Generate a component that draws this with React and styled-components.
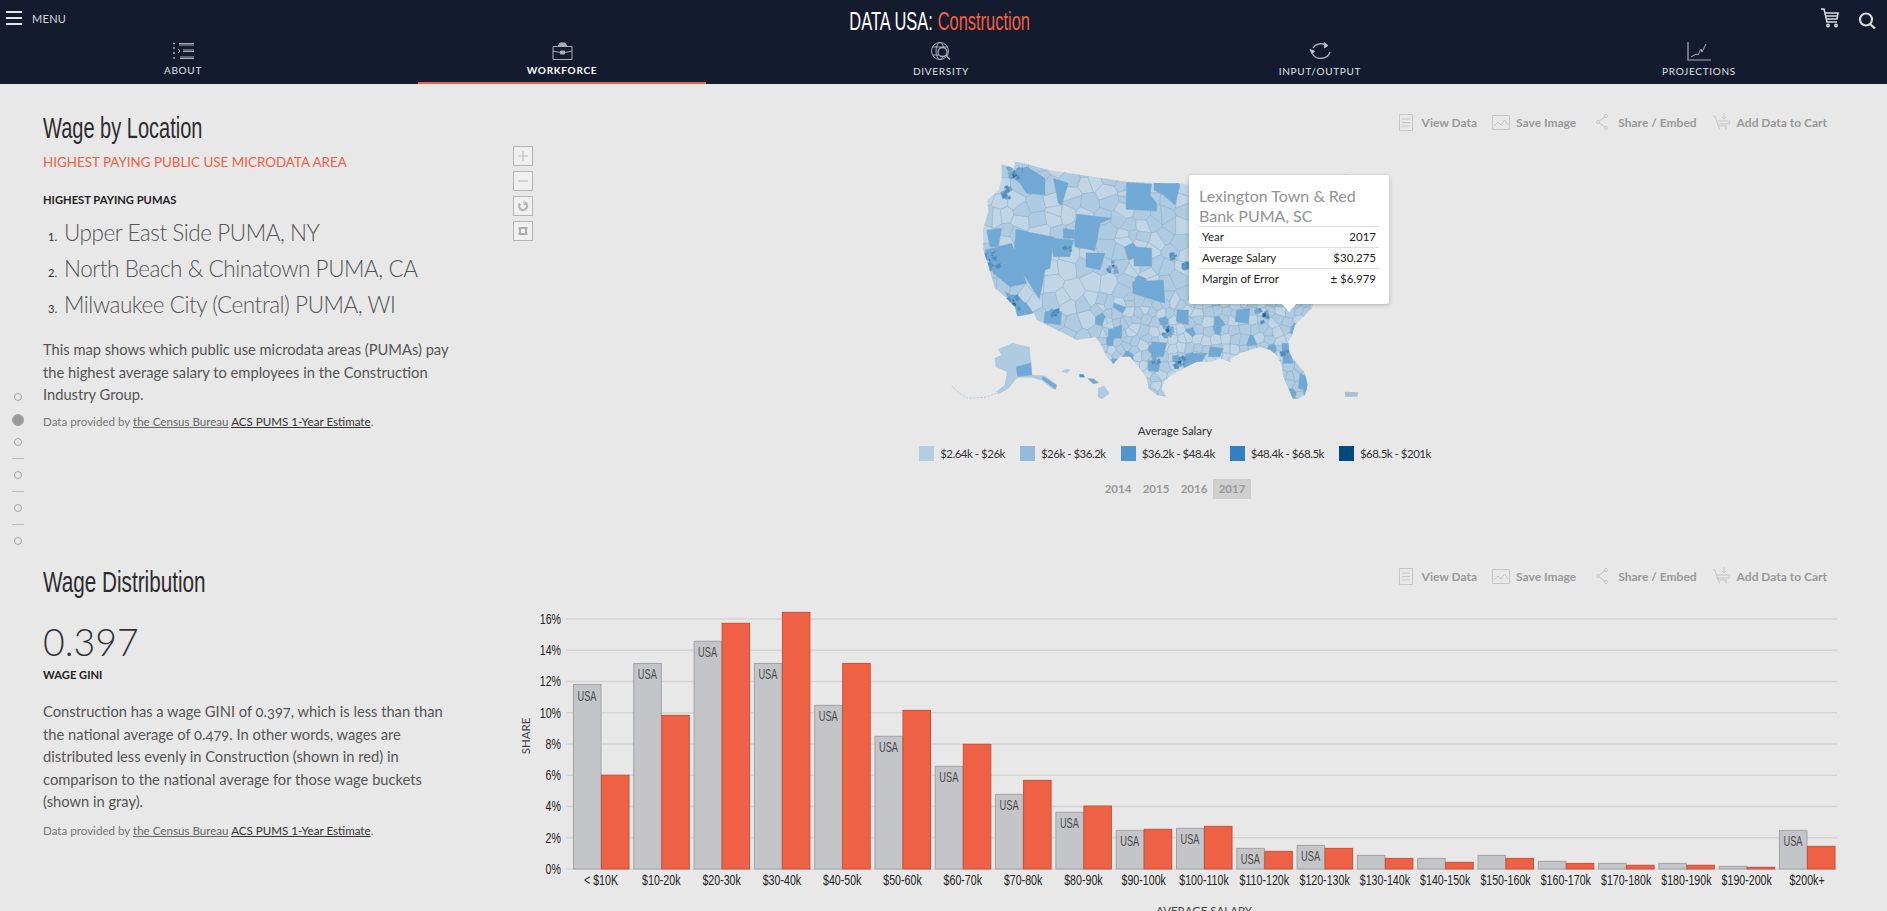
import React from "react";
import styled, { createGlobalStyle } from "styled-components";

const sans = '"Liberation Sans", Arial, sans-serif';
const body = 'Lato, "Noto Sans", sans-serif';
const red = "#ef6145";

const GlobalStyle = createGlobalStyle`
  html, body { margin: 0; height: 911px; overflow: hidden; background: #e8e8e8; }
  body { font-family: ${body}; color: #555; }
  * { box-sizing: border-box; }
`;

const Page = styled.div`
  position: relative;
  width: 1887px;
`;

/* header */
const Header = styled.header`
  height: 84px;
  background: #141b2e;
`;
const TopBar = styled.div`
  display: grid;
  grid-template-columns: 1fr auto 1fr;
  align-items: flex-start;
  height: 37px;
  padding: 8px 10px 0 6px;
`;
const MenuBtn = styled.div`
  display: flex;
  align-items: center;
  gap: 10px;
  margin-top: 3px;
  color: #d6d8dd;
  font: 400 11px ${body};
  letter-spacing: 0.3px;
`;
const Burger = styled.div`
  width: 16px;
  height: 14px;
  border-top: 2px solid #e4e5e8;
  border-bottom: 2px solid #e4e5e8;
  position: relative;
  &::after {
    content: "";
    position: absolute;
    left: 0;
    right: 0;
    top: 4px;
    height: 2px;
    background: #e4e5e8;
  }
`;
const Logo = styled.div`
  font: 400 26.5px/24px ${sans};
  color: #fff;
  white-space: nowrap;
  margin: 1px 4px 0 0;
  transform: scaleX(0.62);
  span {
    color: ${red};
    margin-left: 8px;
  }
`;
const HeadIcons = styled.div`
  display: flex;
  justify-content: flex-end;
  gap: 18px;
`;
const TabRow = styled.nav`
  display: flex;
  gap: 91px;
  margin-left: 39px;
`;
const Tab = styled.a`
  width: 288px;
  height: 47px;
  display: flex;
  flex-direction: column;
  align-items: center;
  padding-top: 5px;
  border-bottom: 2px solid ${(p) => (p.$active ? red : "transparent")};
  color: ${(p) => (p.$active ? "#fff" : "#dfe1e5")};
  font: ${(p) => (p.$active ? 700 : 400)} 10px/14px ${body};
  letter-spacing: 0.7px;
  svg {
    display: block;
    margin-bottom: 3px;
  }
`;

/* sections */
const Section = styled.section`
  display: flex;
  height: ${(p) => p.$h}px;
  padding: 26px 50px 0 43px;
  gap: 62px;
`;
const Side = styled.div`
  width: 408px;
  flex: none;
`;
const Viz = styled.div`
  flex: 1;
  min-width: 0;
`;
const Title = styled.h2`
  margin: 0;
  width: 240px;
  font: 400 30px/36px ${sans};
  color: #2c2c2c;
  white-space: nowrap;
  transform: scaleX(${(p) => p.$squeeze});
  transform-origin: left center;
`;
const Sub = styled.div`
  margin-top: 7px;
  font: 400 13.4px/18px ${body};
  color: ${red};
  text-transform: uppercase;
`;
const Label = styled.div`
  margin-top: ${(p) => p.$top}px;
  font: 700 11.2px/16px ${body};
  color: #222;
  text-transform: uppercase;
`;
const Rank = styled.ol`
  margin: 6.5px 0 0;
  padding: 0;
  list-style: none;
`;
const RankItem = styled.li`
  display: flex;
  align-items: baseline;
  height: 36px;
  font: 300 22.5px/36px ${body};
  letter-spacing: -0.45px;
  color: #555;
  small {
    width: 21px;
    padding-left: 5px;
    font: 400 11px ${body};
    letter-spacing: 0;
    color: #333;
  }
`;
const Text = styled.p`
  margin: ${(p) => p.$top}px 0 0;
  font: 400 14.7px/22.6px ${body};
  color: #555;
  font-variant-numeric: oldstyle-nums;
`;
const Source = styled.div`
  margin-top: ${(p) => p.$top}px;
  font: 400 11.6px/16px ${body};
  color: #777;
  a {
    color: #666;
    text-decoration: underline;
  }
  a + a {
    color: #333;
  }
`;
const Stat = styled.div`
  margin-top: 19px;
  font: 300 37.5px/46px ${body};
  color: #333;
`;

/* actions */
const Actions = styled.div`
  display: flex;
  justify-content: flex-end;
  align-items: center;
  height: 24px;
  padding-right: 10px;
`;
const Action = styled.a`
  display: flex;
  align-items: center;
  gap: ${(p) => p.$gap}px;
  margin-left: ${(p) => p.$left}px;
  font: 700 12px ${body};
  color: #999;
`;

/* map */
const MapRow = styled.div`
  display: flex;
  height: 280px;
  margin-top: 6px;
`;
const Controls = styled.div`
  width: 20px;
  padding-top: 6px;
  display: flex;
  flex-direction: column;
  gap: 5px;
`;
const Ctrl = styled.div`
  width: 20px;
  height: 20px;
  border: 1px solid #b5b5b5;
  background: #f0f0f0;
  display: flex;
  align-items: center;
  justify-content: center;
`;
const MapBox = styled.div`
  position: relative;
  width: 500px;
  height: 280px;
  margin-left: 397px;
`;
const MapSvg = styled.svg`
  display: block;
`;
const Tooltip = styled.div`
  position: absolute;
  left: 259px;
  top: 35px;
  width: 200px;
  height: 129px;
  padding: 11px 10px 0;
  background: #fff;
  border-radius: 2px;
  box-shadow: 0 1px 4px rgba(0, 0, 0, 0.25);
  &::after {
    content: "";
    position: absolute;
    left: 93px;
    bottom: -8px;
    border-left: 7px solid transparent;
    border-right: 7px solid transparent;
    border-top: 8px solid #fff;
  }
`;
const TipTitle = styled.div`
  font: 400 16px/20px ${body};
  color: #929292;
  height: 40px;
`;
const TipRow = styled.div`
  display: flex;
  justify-content: space-between;
  height: 21px;
  padding: 0 3px;
  border-top: 1px solid #ddd;
  font: 400 11.5px/20px ${body};
  color: #222;
`;
const LegendTitle = styled.div`
  margin-top: 3px;
  text-align: center;
  font: 400 11.5px/16px ${body};
  color: #333;
`;
const Legend = styled.div`
  display: flex;
  justify-content: center;
  gap: 15px;
  margin-top: 7px;
`;
const LegendItem = styled.div`
  display: flex;
  align-items: center;
  gap: 6px;
  font: 400 11.5px/15px ${body};
  letter-spacing: -0.5px;
  color: #333;
  i {
    width: 15px;
    height: 15px;
    background: ${(p) => p.$c};
  }
`;
const Years = styled.div`
  display: flex;
  justify-content: center;
  margin-top: 18px;
`;
const Year = styled.div`
  width: 38px;
  height: 20px;
  text-align: center;
  font: 700 11.5px/20px ${body};
  color: #999;
  background: ${(p) => (p.$on ? "#cfcfcf" : "transparent")};
`;

const ChartSvg = styled.svg`
  display: block;
  margin-top: 12px;
  overflow: hidden;
`;

/* side dots */
const Dots = styled.div`
  position: absolute;
  left: 13px;
  top: 393px;
  width: 10px;
  display: flex;
  flex-direction: column;
  align-items: center;
`;
const Dot = styled.div`
  flex: none;
  width: ${(p) => (p.$on ? 12 : 8)}px;
  height: ${(p) => (p.$on ? 12 : 8)}px;
  margin-bottom: ${(p) => (p.$on ? 12 : 12.5)}px;
  border-radius: 50%;
  border: 1px solid #a5a5a5;
  background: ${(p) => (p.$on ? "#999" : "transparent")};
`;
const Rule = styled.div`
  flex: none;
  width: 12px;
  height: 1px;
  margin-bottom: 11.5px;
  background: #bbb;
`;

/* map drawing, in 3x coordinates of the 500x280 box */
const shades = ["#c0d6e6", "#aecbe1", "#70a9d5", "#4a8ec6", "#1f5f94"];

const outline = [[215,72],[252,85],[255,65],[290,72],[355,90],[440,103],[590,125],[700,130],[755,130],[790,140],[860,150],[900,130],[1000,160],[1100,170],[1200,150],[1245,103],[1262,105],[1290,160],[1230,200],[1200,260],[1170,330],[1180,420],[1150,492],[1145,505],[1120,530],[1095,555],[1085,590],[1075,605],[1078,640],[1100,670],[1125,700],[1133,735],[1125,765],[1100,778],[1088,775],[1075,745],[1060,710],[1055,680],[1045,650],[1020,630],[990,622],[960,630],[930,640],[905,655],[900,665],[870,655],[845,665],[800,665],[770,680],[740,695],[705,720],[695,745],[708,770],[680,765],[655,745],[650,715],[625,680],[600,650],[570,650],[550,672],[530,650],[510,610],[497,592],[440,600],[385,572],[320,540],[312,520],[262,530],[255,500],[225,470],[195,445],[180,395],[175,375],[160,330],[158,270],[175,215],[172,180],[205,150],[215,120]];

const bigCells = [[530,160,0],[470,130,0],[430,185,1],[370,230,0],[590,300,0],[630,310,0],[280,470,0],[230,300,0],[270,240,0],[200,225,0],[400,480,0],[480,480,0],[620,380,0],[530,540,0],[650,400,0]];

const overlays = [
  [[[258,268],[372,292],[360,385],[345,390],[338,430],[328,478],[250,355]],2],
  [[[440,222],[545,235],[510,250],[495,332],[435,320],[432,285]],2],
  [[[590,128],[665,132],[660,165],[680,190],[680,213],[588,208]],2],
  [[[612,320],[665,325],[665,378],[612,378]],2],
  [[[535,570],[575,555],[575,595],[535,595]],2],
  [[[345,515],[395,515],[392,555],[342,548]],2],
  [[[370,115],[415,130],[395,195],[385,190]],2],
  [[[672,105],[725,105],[750,135],[735,195],[700,165],[672,150]],2],
  [[[468,338],[525,340],[510,390],[468,380]],2],
  [[[608,425],[700,420],[705,490],[608,460]],2],
  [[[740,510],[775,510],[775,555],[740,545]],2],
  [[[665,605],[710,610],[700,650],[665,650]],2],
  [[[655,660],[690,670],[685,695],[655,692]],2],
  [[[232,100],[290,80],[345,115],[345,165],[290,160],[270,130]],2],
  [[[170,270],[215,265],[205,320],[180,320]],2],
  [[[165,330],[245,310],[290,430],[240,440],[190,400]],2],
  [[[225,455],[290,490],[310,520],[262,528]],2],
  [[[365,295],[430,300],[420,350],[370,350]],2],
  [[[400,265],[432,270],[432,295],[400,295]],2],
  [[[920,510],[960,505],[955,550],[915,545]],2],
  [[[840,620],[880,625],[870,650],[835,650]],2],
  [[[780,640],[830,640],[815,665],[775,668]],2],
  [[[1055,610],[1075,610],[1090,670],[1060,670]],2],
  [[[1110,700],[1130,710],[1130,750],[1105,745]],2],
];

const cities = [[185,365,24,20],[250,490,20,16],[255,102,18,14],[228,158,16,12],[375,525,12,8],[550,378,16,10],[715,575,16,10],[750,665,14,14],[680,665,10,6],[410,330,10,6],[1000,530,20,12],[1068,640,12,6],[730,345,12,6],[770,380,10,6]];

function rng(seed) {
  let s = seed;
  return () => {
    s = (s + 0x6d2b79f5) | 0;
    let t = Math.imul(s ^ (s >>> 15), 1 | s);
    t = (t + Math.imul(t ^ (t >>> 7), 61 | t)) ^ t;
    return ((t ^ (t >>> 14)) >>> 0) / 4294967296;
  };
}

function clipHalf(poly, a, b) {
  const mx = (a[0] + b[0]) / 2;
  const my = (a[1] + b[1]) / 2;
  const nx = b[0] - a[0];
  const ny = b[1] - a[1];
  const side = (p) => (p[0] - mx) * nx + (p[1] - my) * ny;
  const out = [];
  poly.forEach((p, i) => {
    const q = poly[(i + 1) % poly.length];
    const sp = side(p);
    const sq = side(q);
    if (sp <= 0) out.push(p);
    if ((sp < 0 && sq > 0) || (sp > 0 && sq < 0)) {
      const t = sp / (sp - sq);
      out.push([p[0] + (q[0] - p[0]) * t, p[1] + (q[1] - p[1]) * t]);
    }
  });
  return out;
}

function scatter(r, seeds, x0, x1, y0, y1, step, light, mid) {
  for (let x = x0; x < x1; x += step) {
    for (let y = y0; y < y1; y += step) {
      const v = r();
      const j = step * 0.7;
      seeds.push([x + r() * j - j / 2, y + r() * j - j / 2, v < light ? 0 : v < mid ? 1 : 2]);
    }
  }
}

function buildCells() {
  const r = rng(17);
  const seeds = [...bigCells];
  scatter(r, seeds, 165, 590, 75, 600, 52, 0.45, 1);
  scatter(r, seeds, 590, 790, 130, 490, 42, 0.4, 0.92);
  scatter(r, seeds, 510, 1180, 490, 790, 27, 0.42, 0.9);
  const box = [[100,40],[1320,40],[1320,800],[100,800]];
  return seeds.map((s) => {
    let poly = box;
    seeds.forEach((o) => {
      if (o !== s && poly.length) poly = clipHalf(poly, s, o);
    });
    return { poly, c: s[2] };
  });
}

function buildCityBits() {
  const r = rng(5);
  const bits = [];
  cities.forEach(([cx, cy, spread, n]) => {
    for (let i = 0; i < n; i++) {
      const x = cx + (r() - 0.5) * spread * 2;
      const y = cy + (r() - 0.5) * spread * 2;
      const d = 3 + r() * 7;
      const v = r();
      const near = Math.hypot(x - cx, y - cy) / spread;
      bits.push({
        poly: [[x - d, y - d * r()], [x + d * r(), y - d], [x + d, y + d * r()], [x - d * r(), y + d]],
        c: near < 0.4 && v < 0.5 ? 4 : v < 0.6 ? 3 : 2,
      });
    }
  });
  return bits;
}

const pts = (poly) => poly.map((p) => p.map((n) => n.toFixed(1)).join(",")).join(" ");
const cells = buildCells();
const cityBits = buildCityBits();

const alaska = [[205,628],[248,610],[298,622],[305,705],[345,708],[380,735],[378,748],[365,745],[335,720],[305,712],[262,712],[235,745],[205,762],[200,755],[225,735],[232,695],[198,680],[195,655],[215,645]];
const islands = [
  [[395,695],[408,688],[420,690],[412,698]],
  [[447,703],[460,703],[465,712],[450,712]],
  [[472,715],[490,716],[507,728],[490,732]],
  [[505,745],[522,738],[538,760],[515,777],[505,770]],
];

function UsMap() {
  return (
    <MapSvg width="500" height="280" viewBox="0 0 1500 840">
      <defs>
        <clipPath id="lower48">
          <polygon points={pts(outline)} />
        </clipPath>
      </defs>
      <g clipPath="url(#lower48)" stroke="#86a6be" strokeWidth="1.2" strokeLinejoin="round">
        {cells.map((cell, i) => (
          <polygon key={i} points={pts(cell.poly)} fill={shades[cell.c]} />
        ))}
        {overlays.map(([poly, c], i) => (
          <polygon key={i} points={pts(poly)} fill={shades[c]} />
        ))}
        {cityBits.map((bit, i) => (
          <polygon key={i} points={pts(bit.poly)} fill={shades[bit.c]} />
        ))}
      </g>
      <g stroke="#9ab8cf" strokeWidth="1">
        <polygon points={pts(alaska)} fill={shades[1]} />
        <polygon points="258,680 303,668 306,705 262,710" fill={shades[2]} />
        <polygon points="338,708 380,735 376,748 336,718" fill={shades[2]} />
        {islands.map((poly, i) => (
          <polygon key={i} points={pts(poly)} fill={i === 1 ? shades[3] : shades[i === 2 ? 2 : 1]} />
        ))}
        <polygon points="1245,755 1285,757 1282,770 1245,770" fill="#a9bfce" stroke="none" />
      </g>
      <polyline points="200,760 165,772 115,775 90,762 65,738" fill="none" stroke="#b4cadb" strokeWidth="3" strokeDasharray="7 4" />
    </MapSvg>
  );
}

/* chart */
const buckets = [
  ["< $10K",11.8,6.0],["$10-20k",13.15,9.83],["$20-30k",14.57,15.72],["$30-40k",13.15,16.42],["$40-50k",10.47,13.15],
  ["$50-60k",8.49,10.15],["$60-70k",6.57,7.98],["$70-80k",4.78,5.67],["$80-90k",3.63,4.03],["$90-100k",2.47,2.54],
  ["$100-110k",2.6,2.73],["$110-120k",1.32,1.13],["$120-130k",1.51,1.32],["$130-140k",0.87,0.68],["$140-150k",0.68,0.43],
  ["$150-160k",0.87,0.68],["$160-170k",0.49,0.36],["$170-180k",0.36,0.24],["$180-190k",0.36,0.24],["$190-200k",0.17,0.11],
  ["$200k+",2.47,1.45],
];
const baseY = 269;
const pxPerPct = 15.63;
const ticks = [0, 2, 4, 6, 8, 10, 12, 14, 16];

const Tick = styled.text`
  font: 400 14px ${sans};
  fill: #222;
`;
const BarTag = styled.text`
  font: 400 14px ${sans};
  fill: #4a4a4a;
`;
const AxisTitle = styled.text`
  font: 400 11.5px ${body};
  fill: #444;
`;
const squeeze = (x, y, k = 0.76) => `translate(${x} ${y}) scale(${k} 1)`;

function WageChart() {
  return (
    <ChartSvg width="1324" height="320" viewBox="0 0 1324 320">
      {ticks.map((t) => {
        const y = baseY - t * pxPerPct;
        return (
          <g key={t}>
            <line x1="53" x2="1324" y1={y} y2={y} stroke="#d4d4d4" strokeWidth="1.5" />
            <Tick transform={squeeze(48, y + 5)} textAnchor="end">{t}%</Tick>
          </g>
        );
      })}
      {buckets.map(([name, usa, own], i) => {
        const x = 60 + i * 60.3;
        const usaH = usa * pxPerPct;
        const ownH = own * pxPerPct;
        return (
          <g key={name}>
            <rect x={x + 0.5} y={baseY - usaH} width="27.5" height={usaH} fill="#c4c5c9" stroke="#a2a2a5" />
            <rect x={x + 28.5} y={baseY - ownH} width="27.5" height={ownH} fill={red} stroke="#cc4f36" />
            {usa > 1 && <BarTag transform={squeeze(x + 14, baseY - usaH + 16, 0.66)} textAnchor="middle">USA</BarTag>}
            <Tick transform={squeeze(x + 28, 285)} textAnchor="middle">{name}</Tick>
          </g>
        );
      })}
      <AxisTitle transform="translate(17 136) rotate(-90)" textAnchor="middle">SHARE</AxisTitle>
      <AxisTitle x="691" y="315" textAnchor="middle">AVERAGE SALARY</AxisTitle>
    </ChartSvg>
  );
}

/* icons */
const line = { fill: "none", stroke: "#a9adb7", strokeWidth: 1 };

const AboutIcon = () => (
  <svg width="23" height="18" viewBox="0 0 23 18" {...line}>
    <path d="M1 1.5h2M1 6h2M1 11h2M1 16h2" strokeWidth="1.4" />
    <path d="M7 1.5h15M7 3h15M11 8h11M11 9.5h11M8 15h14M8 16.5h14" />
    <path d="M6 7l2 2-2 2" />
  </svg>
);
const WorkIcon = () => (
  <svg width="23" height="18" viewBox="0 0 23 18" {...line}>
    <path d="M2 4.5h19v13H2zM2 9l7 1.5h5L21 9" />
    <path d="M7 4.5l2-3.5h5l2 3.5" fill="#a9adb7" />
    <path d="M9.5 9h4v3h-4z" fill="#a9adb7" />
  </svg>
);
const DiversityIcon = () => (
  <svg width="23" height="19" viewBox="0 0 23 19" {...line}>
    <circle cx="10" cy="9" r="8.5" />
    <ellipse cx="10" cy="9" rx="4" ry="8.5" />
    <path d="M2 5h16M2 13h16" />
    <circle cx="12.5" cy="10" r="4.5" fill="#141b2e" strokeWidth="1.3" />
    <path d="M16 13.5l4 4" strokeWidth="1.6" />
  </svg>
);
const InputIcon = () => (
  <svg width="23" height="19" viewBox="0 0 23 19" {...line}>
    <path d="M4 6A9 8.5 0 0 1 16.500 3" strokeWidth="1.4" />
    <path d="M15 0.5l4 3-3.5 2.5z" fill="#c9ccd2" />
    <path d="M21 10A9.500 8.500 0 0 1 3.500 12" strokeWidth="1.4" />
    <path d="M1 7.500l4.500 1.500-2.500 3z" fill="#d8dade" />
  </svg>
);
const ProjIcon = () => (
  <svg width="24" height="19" viewBox="0 0 24 19" {...line}>
    <path d="M1 0v18h23" strokeWidth="1.2" />
    <path d="M4 15l5-3 2 1 3-6 1 3 4-8" />
  </svg>
);
const CartIcon = () => (
  <svg width="20" height="20" viewBox="0 0 20 20" fill="none" stroke="#d9dadd" strokeWidth="1.5">
    <path d="M1 1h3l3 13h10M5 5h13l-1 6H6.5" />
    <path d="M6 8h11" />
    <circle cx="8" cy="17.5" r="1.2" />
    <circle cx="16" cy="17.5" r="1.2" />
  </svg>
);
const SearchGlyph = styled.svg`
  margin-top: 4px;
`;
const SearchIcon = () => (
  <SearchGlyph width="19" height="17" viewBox="0 0 19 17" fill="none" stroke="#d9dadd" strokeWidth="2.2">
    <circle cx="8" cy="7.5" r="6" />
    <path d="M12 12l5 4.5" />
  </SearchGlyph>
);

const grey = { fill: "none", stroke: "#c6c6c6", strokeWidth: 1 };
const DocIcon = () => (
  <svg width="14" height="17" viewBox="0 0 14 17" {...grey}>
    <path d="M.5.5h13v16H.5zM3 5h8M3 8.5h8M3 12h8" />
  </svg>
);
const ImageIcon = () => (
  <svg width="18" height="15" viewBox="0 0 18 15" {...grey}>
    <path d="M.5.5h17v14H.5zM2 11l4-4 3 3 3.5-5 3.5 5" />
  </svg>
);
const ShareIcon = () => (
  <svg width="12" height="16" viewBox="0 0 12 16" {...grey}>
    <circle cx="2" cy="8" r="1.5" />
    <circle cx="10" cy="2" r="1.5" />
    <circle cx="10" cy="14" r="1.5" />
    <path d="M3.2 7l5.6-4M3.2 9l5.6 4" />
  </svg>
);
const AddCartIcon = () => (
  <svg width="18" height="18" viewBox="0 0 18 18" {...grey}>
    <path d="M0 3h2l3 10h9M4 8h13M5 11h11l1-3" />
    <path d="M11 0v6M9 4l2 2 2-2" />
    <path d="M6 13v3h1M13 13v3h1" />
  </svg>
);

const PlusIcon = () => (
  <svg width="12" height="12" viewBox="0 0 12 12" stroke="#bdbdbd" strokeWidth="1.2"><path d="M6 1v10M1 6h10" /></svg>
);
const MinusIcon = () => (
  <svg width="12" height="12" viewBox="0 0 12 12" stroke="#bdbdbd" strokeWidth="1.2"><path d="M1 6h10" /></svg>
);
const ResetIcon = () => (
  <svg width="12" height="12" viewBox="0 0 12 12" fill="none" stroke="#b5b5b5" strokeWidth="2.2">
    <path d="M3 3.5A4 4 0 1 0 8 2.5" />
    <path d="M7 .5v4h3" strokeWidth="1" />
  </svg>
);
const CenterIcon = () => (
  <svg width="12" height="12" viewBox="0 0 12 12" fill="none" stroke="#adadad" strokeWidth="2">
    <path d="M3 3h6v6H3z" />
    <path d="M1 3h1M10 3h1M1 9h1M10 9h1" strokeWidth="1" />
  </svg>
);

const tabs = [
  { name: "ABOUT", Icon: AboutIcon },
  { name: "WORKFORCE", Icon: WorkIcon, active: true },
  { name: "DIVERSITY", Icon: DiversityIcon },
  { name: "INPUT/OUTPUT", Icon: InputIcon },
  { name: "PROJECTIONS", Icon: ProjIcon },
];
const legend = [
  ["#b3cde3", "$2.64k - $26k"],
  ["#94bad9", "$26k - $36.2k"],
  ["#5096cd", "$36.2k - $48.4k"],
  ["#3280bd", "$48.4k - $68.5k"],
  ["#004a7c", "$68.5k - $201k"],
];

function ActionBar() {
  return (
    <Actions>
      <Action $gap={9} $left={0}><DocIcon />View Data</Action>
      <Action $gap={6} $left={15}><ImageIcon />Save Image</Action>
      <Action $gap={10} $left={20}><ShareIcon />Share / Embed</Action>
      <Action $gap={6} $left={16}><AddCartIcon />Add Data to Cart</Action>
    </Actions>
  );
}

function DataSource({ top }) {
  return (
    <Source $top={top}>
      Data provided by <a>the Census Bureau</a> <a>ACS PUMS 1-Year Estimate</a>.
    </Source>
  );
}

export default function App() {
  return (
    <Page>
      <GlobalStyle />
      <Header>
        <TopBar>
          <MenuBtn><Burger />MENU</MenuBtn>
          <Logo>DATA USA:<span>Construction</span></Logo>
          <HeadIcons><CartIcon /><SearchIcon /></HeadIcons>
        </TopBar>
        <TabRow>
          {tabs.map(({ name, Icon, active }) => (
            <Tab key={name} $active={active}><Icon />{name}</Tab>
          ))}
        </TabRow>
      </Header>

      <Section $h={454}>
        <Side>
          <Title $squeeze={0.667}>Wage by Location</Title>
          <Sub>Highest Paying Public Use Microdata Area</Sub>
          <Label $top={21}>Highest Paying PUMAs</Label>
          <Rank>
            <RankItem><small>1.</small>Upper East Side PUMA, NY</RankItem>
            <RankItem><small>2.</small>North Beach &amp; Chinatown PUMA, CA</RankItem>
            <RankItem><small>3.</small>Milwaukee City (Central) PUMA, WI</RankItem>
          </Rank>
          <Text $top={15.5}>
            This map shows which public use microdata areas (PUMAs) pay the highest average salary to employees in the Construction Industry Group.
          </Text>
          <DataSource top={8} />
        </Side>
        <Viz>
          <ActionBar />
          <MapRow>
            <Controls>
              <Ctrl><PlusIcon /></Ctrl>
              <Ctrl><MinusIcon /></Ctrl>
              <Ctrl><ResetIcon /></Ctrl>
              <Ctrl><CenterIcon /></Ctrl>
            </Controls>
            <MapBox>
              <UsMap />
              <Tooltip>
                <TipTitle>Lexington Town &amp; Red Bank PUMA, SC</TipTitle>
                <TipRow><span>Year</span><span>2017</span></TipRow>
                <TipRow><span>Average Salary</span><span>$30,275</span></TipRow>
                <TipRow><span>Margin of Error</span><span>± $6,979</span></TipRow>
              </Tooltip>
            </MapBox>
          </MapRow>
          <LegendTitle>Average Salary</LegendTitle>
          <Legend>
            {legend.map(([c, t]) => (
              <LegendItem key={t} $c={c}><i />{t}</LegendItem>
            ))}
          </Legend>
          <Years>
            <Year>2014</Year>
            <Year>2015</Year>
            <Year>2016</Year>
            <Year $on>2017</Year>
          </Years>
        </Viz>
      </Section>

      <Section $h={373}>
        <Side>
          <Title $squeeze={0.69}>Wage Distribution</Title>
          <Stat>0.397</Stat>
          <Label $top={2}>Wage GINI</Label>
          <Text $top={17}>
            Construction has a wage GINI of 0.397, which is less than than the national average of 0.479. In other words, wages are distributed less evenly in Construction (shown in red) in comparison to the national average for those wage buckets (shown in gray).
          </Text>
          <DataSource top={10} />
        </Side>
        <Viz>
          <ActionBar />
          <WageChart />
        </Viz>
      </Section>

      <Dots>
        <Dot />
        <Dot $on />
        <Dot />
        <Rule />
        <Dot />
        <Rule />
        <Dot />
        <Rule />
        <Dot />
      </Dots>
    </Page>
  );
}
